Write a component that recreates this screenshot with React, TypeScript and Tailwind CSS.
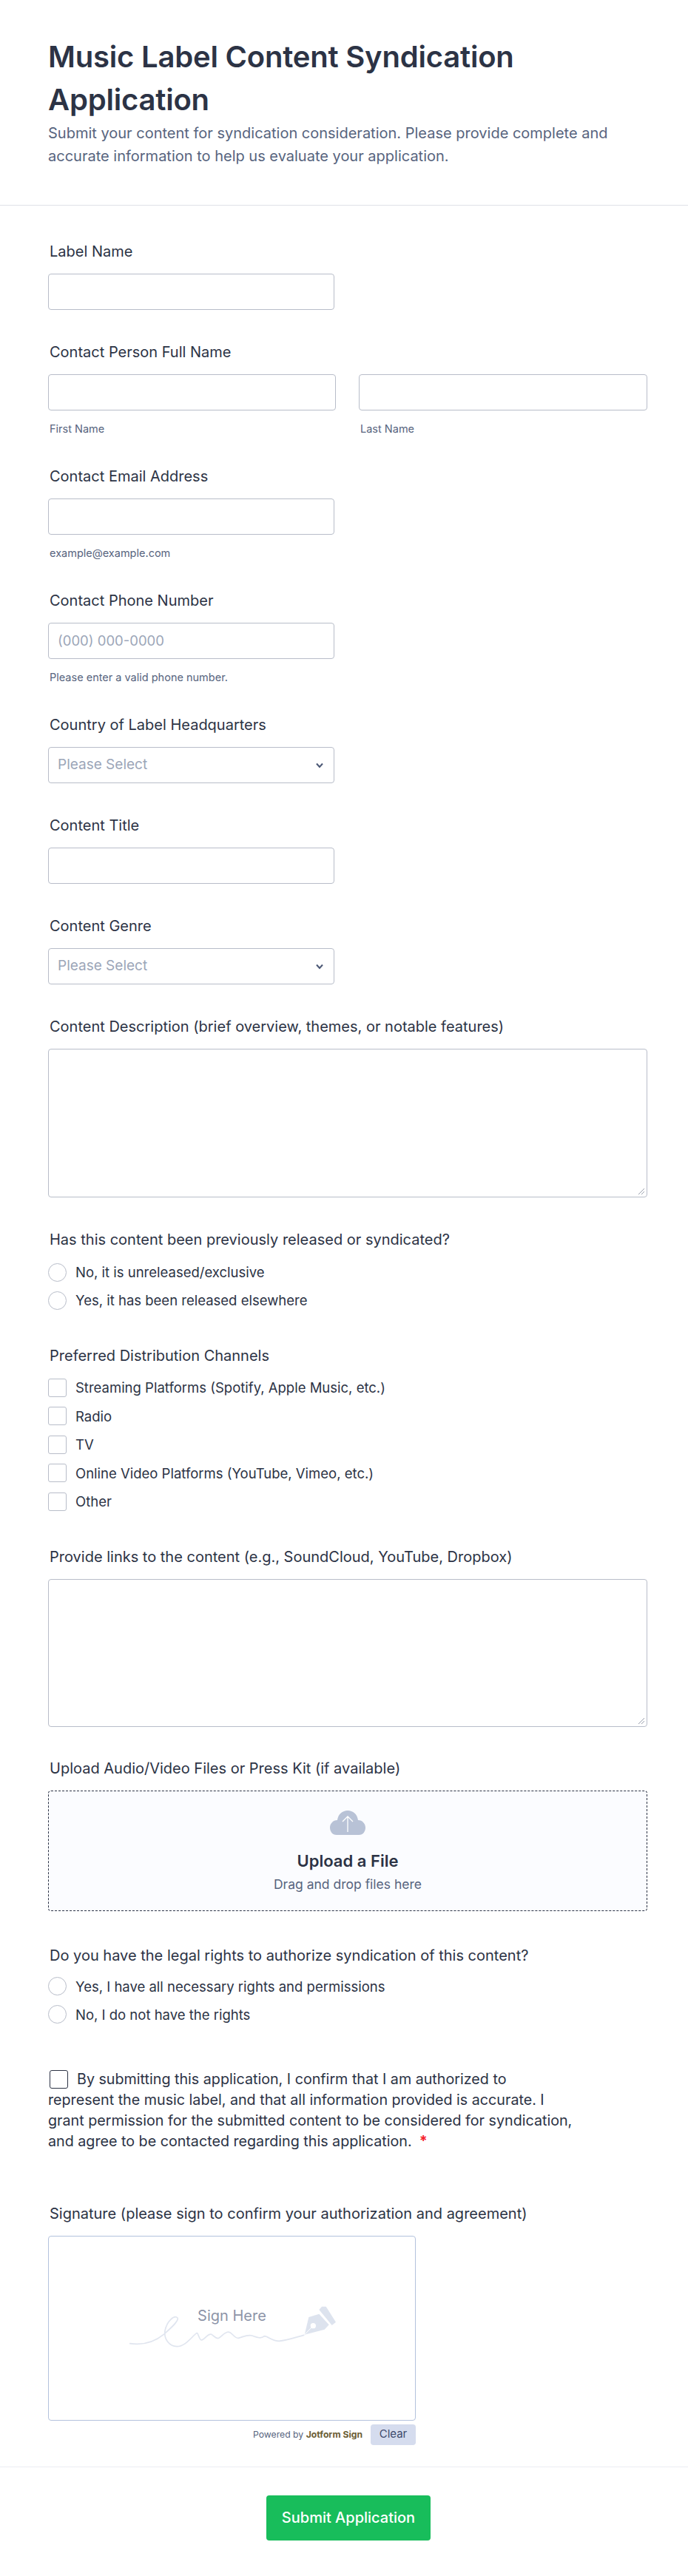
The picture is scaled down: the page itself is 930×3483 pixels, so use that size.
import React from 'react';

const inputClass = 'block h-[49px] bg-white rounded-[4px] border border-[#b8bdc9]';

const Label: React.FC<{ text: string; className?: string }> = ({ text, className }) => (
    <div className={`pl-[2px] text-[20px] leading-[20px] font-normal text-[#2c3345] whitespace-nowrap ${className ?? ''}`}>{text}</div>
);

const Sub: React.FC<{ text: string; className?: string }> = ({ text, className }) => (
    <div className={`pl-[2px] mt-[17px] text-[14.5px] leading-[15px] text-[#57647e] ${className ?? ''}`}>{text}</div>
);

const Select: React.FC = () => (
    <div className={`${inputClass} w-[387px] mt-[20px] flex items-center justify-between pl-[12px] pr-[13px]`}>
        <span className="text-[19px] text-[#9ca6b8]">Please Select</span>
        <svg width="12" height="8" viewBox="0 0 12 8" fill="none">
            <path d="M2 1.5 L6 6 L10 1.5" stroke="#4b5875" strokeWidth="2" />
        </svg>
    </div>
);

const Option: React.FC<{ text: string; round?: boolean }> = ({ text, round }) => (
    <div className={`flex items-center ${round ? 'h-[38px]' : 'h-[38.5px]'}`}>
        <span className={`block w-[25px] h-[25px] bg-white border border-[#b8bdc9] ${round ? 'rounded-full' : 'rounded-[3px]'}`} />
        <span className="ml-[12px] text-[18.5px] leading-[20px] text-[#2c3345]">{text}</span>
    </div>
);

const App: React.FC = () => {
    return (
        <div className="w-[930px] h-[3483px] bg-white font-['Inter',sans-serif] overflow-hidden">
            <header className="h-[278px] border-b border-[#dfe1e8] pl-[65px] pr-[65px] pt-[48px]">
                <h1 className="text-[40px] leading-[58px] font-semibold text-[#2c3345] tracking-[-0.2px]">
                    Music Label Content Syndication Application
                </h1>
                <p className="mt-[1px] text-[20px] leading-[31px] text-[#57647e]">
                    Submit your content for syndication consideration. Please provide complete and accurate information to help us evaluate your application.
                </p>
            </header>

            <main className="pl-[65px] pr-[55px]">
                <Label text="Label Name" className="mt-[52px]" />
                <div className={`${inputClass} w-[387px] mt-[20px]`} />

                <Label text="Contact Person Full Name" className="mt-[47px]" />
                <div className="flex gap-[31px] mt-[20px]">
                    <div className="w-[389px]">
                        <div className={inputClass} />
                        <Sub text="First Name" />
                    </div>
                    <div className="w-[390px]">
                        <div className={inputClass} />
                        <Sub text="Last Name" />
                    </div>
                </div>

                <Label text="Contact Email Address" className="mt-[47px]" />
                <div className={`${inputClass} w-[387px] mt-[20px]`} />
                <Sub text="example@example.com" />

                <Label text="Contact Phone Number" className="mt-[47px]" />
                <div className={`${inputClass} w-[387px] mt-[20px] flex items-center pl-[12px] text-[18.5px] text-[#9ca6b8]`}>(000) 000-0000</div>
                <Sub text="Please enter a valid phone number." />

                <Label text="Country of Label Headquarters" className="mt-[47px]" />
                <Select />

                <Label text="Content Title" className="mt-[47px]" />
                <div className={`${inputClass} w-[387px] mt-[20px]`} />

                <Label text="Content Genre" className="mt-[47px]" />
                <Select />

                <Label text="Content Description (brief overview, themes, or notable features)" className="mt-[47px]" />
                <div className="relative h-[201px] w-[810px] mt-[20px] rounded-[4px] border border-[#b8bdc9] bg-white">
                    <svg className="absolute right-[2px] bottom-[2px]" width="10" height="10" viewBox="0 0 10 10">
                        <path d="M1 9 L9 1 M5 9 L9 5" stroke="#9aa0ad" strokeWidth="1" />
                    </svg>
                </div>

                <Label text="Has this content been previously released or syndicated?" className="mt-[47px]" />
                <div className="mt-[15px]">
                    <Option round text="No, it is unreleased/exclusive" />
                    <Option round text="Yes, it has been released elsewhere" />
                </div>

                <Label text="Preferred Distribution Channels" className="mt-[46px]" />
                <div className="mt-[14px]">
                    <Option text="Streaming Platforms (Spotify, Apple Music, etc.)" />
                    <Option text="Radio" />
                    <Option text="TV" />
                    <Option text="Online Video Platforms (YouTube, Vimeo, etc.)" />
                    <Option text="Other" />
                </div>

                <Label text="Provide links to the content (e.g., SoundCloud, YouTube, Dropbox)" className="mt-[45px]" />
                <div className="relative h-[200px] w-[810px] mt-[20px] rounded-[4px] border border-[#b8bdc9] bg-white">
                    <svg className="absolute right-[2px] bottom-[2px]" width="10" height="10" viewBox="0 0 10 10">
                        <path d="M1 9 L9 1 M5 9 L9 5" stroke="#9aa0ad" strokeWidth="1" />
                    </svg>
                </div>

                <Label text="Upload Audio/Video Files or Press Kit (if available)" className="mt-[46px]" />
                <div className="h-[163px] w-[810px] mt-[20px] rounded-[4px] border border-dashed border-[#2c3345] bg-[#fbfcff] flex flex-col items-center pt-[26px]">
                    <svg width="48" height="33" viewBox="0 0 48 33">
                        <path d="M9 33 C3 33 0 28 0 23 C0 18 4 13 10 13 C11 5 17 0 24 0 C31 0 37 5 38 13 C44 13 48 18 48 23 C48 28 45 33 39 33 Z" fill="#b8c2d6" />
                        <path d="M24 29 V8 M17 15 L24 8 L31 15" stroke="#fff" strokeWidth="1.3" fill="none" />
                    </svg>
                    <div className="mt-[21px] text-[22px] leading-[28px] font-semibold text-[#2c3345]">Upload a File</div>
                    <div className="mt-[7px] text-[17.5px] leading-[22px] text-[#57647e]">Drag and drop files here</div>
                </div>

                <Label text="Do you have the legal rights to authorize syndication of this content?" className="mt-[50px]" />
                <div className="mt-[13px]">
                    <Option round text="Yes, I have all necessary rights and permissions" />
                    <Option round text="No, I do not have the rights" />
                </div>

                <div className="mt-[54px] w-[760px] text-[19.7px] leading-[28px] text-[#2c3345]">
                    <span className="inline-block align-[-6px] w-[25px] h-[25px] ml-[2px] mr-[12px] rounded-[3px] border border-[#2c3345]" />
                    By submitting this application, I confirm that I am authorized to<br />
                    represent the music label, and that all information provided is accurate. I<br />
                    grant permission for the submitted content to be considered for syndication,<br />
                    and agree to be contacted regarding this application.
                    <span className="ml-[10px] font-bold text-[#f5222d]">*</span>
                </div>

                <Label text="Signature (please sign to confirm your authorization and agreement)" className="mt-[74px]" />
                <div className="h-[250px] w-[497px] mt-[20px] rounded-[4px] border border-[#b3c2dd] bg-white flex items-center justify-center">
                    <div className="relative w-[340px] h-[120px]">
                        <svg width="340" height="120" viewBox="0 0 1020 360" fill="none">
                            <path d="M95 242 C150 250 195 235 232 205 C260 180 295 150 288 138 C275 125 245 150 237 190 C232 225 255 253 285 254 C320 254 345 215 365 200 C372 195 375 228 385 228 C400 226 410 200 425 205 C435 210 445 225 455 220 C470 210 480 195 495 195 C510 198 520 222 535 220 C555 215 570 205 590 210 C605 215 625 225 640 212 C655 212 670 232 700 232 C730 230 770 216 800 208" stroke="#e0e5ef" strokeWidth="5" strokeLinecap="round" />
                            <path d="M803 206 L820 135 L862 122 L902 166 L884 185 Z" fill="#dde3ee" />
                            <path d="M873 92 L890 92 L930 155 L914 168 L862 105 Z" fill="#dde3ee" />
                            <circle cx="838" cy="170" r="11" fill="#fff" />
                            <path d="M805 204 L832 176" stroke="#fff" strokeWidth="3" />
                        </svg>
                        <div className="absolute left-0 right-0 top-[30px] text-center text-[20px] leading-[26px] text-[#8d94a8]">Sign Here</div>
                    </div>
                </div>
                <div className="w-[497px] mt-[5px] flex items-center justify-end">
                    <span className="text-[12.2px] leading-[16px] text-[#57647e]">
                        Powered by <span className="font-bold text-[#6b5e35]">Jotform Sign</span>
                    </span>
                    <span className="ml-[11px] w-[61px] h-[28px] rounded-[4px] bg-[#d5dcee] flex items-center justify-center text-[15px] text-[#3d4a6b]">Clear</span>
                </div>
            </main>

            <footer className="mt-[29px] border-t border-[#eceef3] flex justify-center pt-[38px] pl-[12px]">
                <button className="w-[222px] h-[61px] rounded-[4px] bg-[#18bd5b] text-white text-[20px] font-medium">Submit Application</button>
            </footer>
        </div>
    );
};

export default App;
